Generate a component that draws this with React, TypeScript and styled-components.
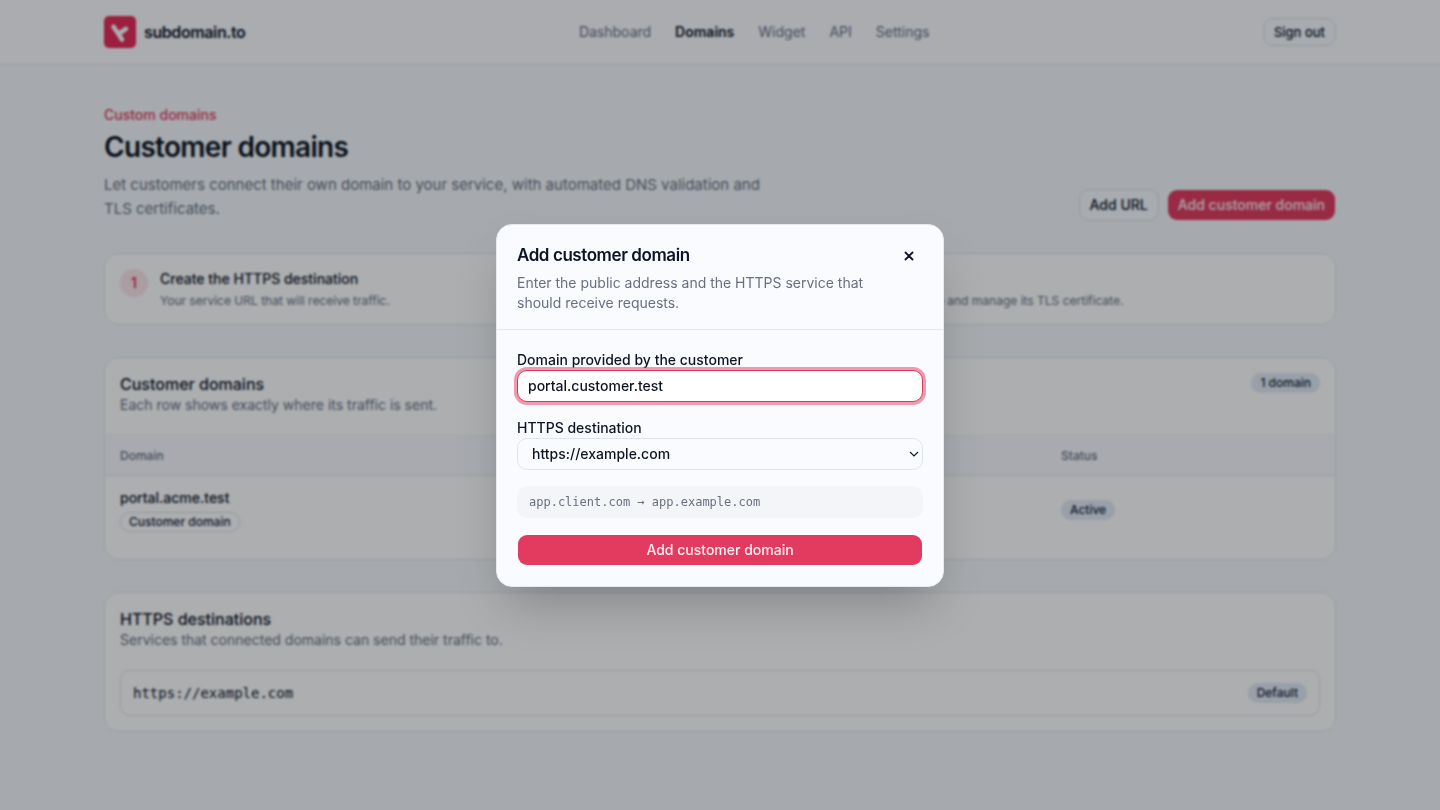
import React, { useEffect, useRef } from "react";
import styled, { createGlobalStyle, css } from "styled-components";

const GlobalStyle = createGlobalStyle`
  *, *::before, *::after { box-sizing: border-box; }
  body {
    margin: 0;
    background: #f7fafc;
    color: #0d1424;
    font-family: Inter, "Liberation Sans", sans-serif;
    font-size: 14px;
    line-height: 20px;
  }
  h1, h2, h3, p, ul, ol { margin: 0; padding: 0; }
  ul, ol { list-style: none; }
  button, input, select { font: inherit; color: inherit; margin: 0; }
`;

const mono = css`
  font-family: "DejaVu Sans Mono", "Liberation Mono", monospace;
`;

const TopBar = styled.header`
  background: #fcfcff;
  border-bottom: 1px solid #e2e6ee;
`;

const TopBarInner = styled.div`
  max-width: 1280px;
  height: 64px;
  margin: 0 auto;
  padding: 0 24px;
  display: flex;
  align-items: center;
  justify-content: space-between;
`;

const Brand = styled.a`
  display: flex;
  align-items: center;
  gap: 8px;
  color: inherit;
  text-decoration: none;
  font-size: 16px;
  font-weight: 600;
  letter-spacing: -0.025em;
`;

const Nav = styled.nav`
  display: flex;
  gap: 24px;
`;

const NavLink = styled.a<{ $active?: boolean }>`
  color: ${(p) => (p.$active ? "#0d1424" : "#687080")};
  font-weight: ${(p) => (p.$active ? 600 : 400)};
  text-decoration: none;
`;

const Button = styled.button<{ $variant: "primary" | "outline"; $small?: boolean; $block?: boolean }>`
  height: ${(p) => (p.$small ? 28 : 32)}px;
  width: ${(p) => (p.$block ? "100%" : "auto")};
  padding: 0 10px;
  border: 1px solid ${(p) => (p.$variant === "primary" ? "transparent" : "#dde2ea")};
  border-radius: 10px;
  background: ${(p) => (p.$variant === "primary" ? "#e33b5f" : "#f9fbff")};
  background-clip: padding-box;
  color: ${(p) => (p.$variant === "primary" ? "#fff1f3" : "#0d1424")};
  font-size: ${(p) => (p.$small ? 13 : 14)}px;
  font-weight: 500;
  white-space: nowrap;
`;

const Main = styled.main`
  max-width: 1280px;
  margin: 0 auto;
  padding: 40px 24px;
  display: flex;
  flex-direction: column;
  gap: 32px;
`;

const Hero = styled.section`
  display: flex;
  align-items: flex-end;
  justify-content: space-between;
  gap: 24px;
`;

const HeroText = styled.div`
  max-width: 672px;
`;

const Eyebrow = styled.p`
  color: #e33b5f;
  font-weight: 500;
`;

const PageTitle = styled.h1`
  margin: 4px 0 8px;
  font-size: 28px;
  line-height: 36px;
  font-weight: 600;
  letter-spacing: -0.025em;
`;

const Lead = styled.p`
  color: #687080;
  font-size: 15px;
  line-height: 24px;
`;

const Actions = styled.div`
  display: flex;
  gap: 8px;
`;

const Card = styled.section`
  border: 1px solid #e2e6ea;
  border-radius: 14px;
  background: #fff;
  overflow: hidden;
`;

const Steps = styled.ol`
  display: grid;
  grid-template-columns: 1fr 1fr;
  gap: 16px;
  padding: 15px;
`;

const Step = styled.li`
  display: flex;
  gap: 12px;
`;

const StepNumber = styled.span`
  flex: none;
  width: 28px;
  height: 28px;
  border-radius: 50%;
  background: #fce7eb;
  color: #e33b5f;
  font-weight: 600;
  line-height: 28px;
  text-align: center;
`;

const StepTitle = styled.h3`
  font-size: 14px;
  font-weight: 500;
`;

const StepText = styled.p`
  margin-top: 4px;
  color: #687080;
  font-size: 12px;
  line-height: 16px;
`;

const CardHeader = styled.div`
  display: flex;
  align-items: flex-start;
  justify-content: space-between;
  padding: 15px 15px 20px;
`;

const CardTitle = styled.h2`
  font-size: 16px;
  line-height: 22px;
  font-weight: 500;
`;

const CardText = styled.p`
  color: #687080;
`;

const Badge = styled.span<{ $outline?: boolean }>`
  display: inline-block;
  height: 20px;
  padding: 0 8px;
  border: 1px solid ${(p) => (p.$outline ? "#dde2ea" : "transparent")};
  border-radius: 10px;
  background: ${(p) => (p.$outline ? "transparent" : "#e4eaf5")};
  color: #141c38;
  font-size: 12px;
  line-height: 18px;
  font-weight: 500;
  white-space: nowrap;
`;

const Table = styled.table`
  width: 100%;
  margin-bottom: 15px;
  border-top: 1px solid #f0f2f6;
  table-layout: fixed;
  border-collapse: separate;
  border-spacing: 0;
  text-align: left;
`;

const Th = styled.th<{ $width?: string }>`
  width: ${(p) => p.$width ?? "auto"};
  height: 40px;
  padding: 0 15px;
  border-bottom: 1px solid #e2e6ee;
  background: #f9fafe;
  color: #687080;
  font-size: 12px;
  font-weight: 500;
`;

const Td = styled.td`
  padding: 12px 15px;
`;

const DomainCell = styled.div`
  display: flex;
  flex-direction: column;
  align-items: flex-start;
  gap: 4px;
  font-weight: 500;
`;

const StatusCell = styled.div`
  display: flex;
`;

const DestinationRow = styled.li`
  display: flex;
  align-items: center;
  justify-content: space-between;
  margin: 0 15px 15px;
  padding: 12px;
  border: 1px solid #e2e6ea;
  border-radius: 10px;
`;

const DestinationUrl = styled.span`
  ${mono}
`;

const Overlay = styled.div`
  position: fixed;
  inset: 0;
  display: flex;
  align-items: center;
  justify-content: center;
  background: rgba(4, 8, 16, 0.33);
  backdrop-filter: blur(1px);
`;

const Dialog = styled.div`
  width: 448px;
  max-width: calc(100% - 32px);
  border: 1px solid #e6e9ef;
  border-radius: 16px;
  background: #f9fbff;
  box-shadow: 0 25px 50px -12px rgba(0, 0, 0, 0.25);
`;

const DialogHeader = styled.div`
  display: flex;
  align-items: flex-start;
  justify-content: space-between;
  gap: 16px;
  padding: 20px 20px 16px;
  border-bottom: 1px solid #e4e8ee;
`;

const DialogTitle = styled.h2`
  margin-bottom: 8px;
  font-size: 17px;
  line-height: 20px;
  font-weight: 600;
  letter-spacing: -0.025em;
`;

const CloseButton = styled.button`
  display: flex;
  align-items: center;
  justify-content: center;
  flex: none;
  width: 28px;
  height: 22px;
  padding: 0;
  border: 0;
  background: transparent;
`;

const Form = styled.form`
  display: flex;
  flex-direction: column;
  gap: 16px;
  padding: 20px;
`;

const Field = styled.label`
  display: flex;
  flex-direction: column;
  font-weight: 500;
`;

const control = css`
  width: 100%;
  height: 32px;
  padding: 0 10px;
  border: 1px solid #dfe3ea;
  border-radius: 10px;
  outline: none;
  font-weight: 500;
`;

const TextInput = styled.input`
  ${control}
  background: #fff;
  &:focus {
    border-color: #d93a5c;
    box-shadow: 0 0 0 3px rgba(227, 59, 95, 0.5);
  }
`;

const SelectBox = styled.span`
  position: relative;
  display: flex;
  svg {
    position: absolute;
    top: 11px;
    right: 4px;
    pointer-events: none;
  }
`;

const Select = styled.select`
  ${control}
  padding: 0 14px;
  appearance: none;
  background: #f9fbff;
`;

const Example = styled.p`
  ${mono}
  padding: 8px 12px;
  border-radius: 10px;
  background: #f3f5f8;
  color: #687080;
  font-size: 12px;
  line-height: 16px;
`;

const Logo = () => (
  <svg width="32" height="32" viewBox="0 0 32 32" aria-hidden="true">
    <rect width="32" height="32" rx="5" fill="#e62a55" />
    <path
      d="M9.500 10.800L13.800 17L18 23.600M15 17.500L22 12.800"
      fill="none"
      stroke="#fff"
      strokeWidth="4.600"
      strokeLinecap="round"
      strokeLinejoin="round"
    />
  </svg>
);

const CloseIcon = () => (
  <svg width="14" height="14" viewBox="0 0 14 14" aria-hidden="true">
    <path d="M3.500 3.500L10.500 10.500M10.500 3.500L3.500 10.500" stroke="#0d1424" strokeWidth="1.800" strokeLinecap="round" />
  </svg>
);

const ChevronIcon = () => (
  <svg width="10" height="10" viewBox="0 0 10 10" aria-hidden="true">
    <path d="M1 3L5 7L9 3" fill="none" stroke="#0d1424" strokeWidth="1.100" />
  </svg>
);

const links = ["Dashboard", "Domains", "Widget", "API", "Settings"];

const steps = [
  { title: "Create the HTTPS destination", text: "Your service URL that will receive traffic." },
  { title: "Connect another domain", text: "We validate its DNS, then issue and manage its TLS certificate." },
];

export default function App() {
  const domainRef = useRef<HTMLInputElement>(null);

  useEffect(() => {
    const input = domainRef.current;
    if (!input) return;
    input.focus();
    input.setSelectionRange(input.value.length, input.value.length);
  }, []);

  return (
    <>
      <GlobalStyle />
      <TopBar>
        <TopBarInner>
          <Brand href="#">
            <Logo />
            subdomain.to
          </Brand>
          <Nav>
            {links.map((link) => (
              <NavLink key={link} href="#" $active={link === "Domains"}>
                {link}
              </NavLink>
            ))}
          </Nav>
          <Button $variant="outline" $small>
            Sign out
          </Button>
        </TopBarInner>
      </TopBar>

      <Main>
        <Hero>
          <HeroText>
            <Eyebrow>Custom domains</Eyebrow>
            <PageTitle>Customer domains</PageTitle>
            <Lead>
              Let customers connect their own domain to your service, with automated DNS validation and TLS
              certificates.
            </Lead>
          </HeroText>
          <Actions>
            <Button $variant="outline">Add URL</Button>
            <Button $variant="primary">Add customer domain</Button>
          </Actions>
        </Hero>

        <Card>
          <Steps>
            {steps.map((step, i) => (
              <Step key={step.title}>
                <StepNumber>{i + 1}</StepNumber>
                <div>
                  <StepTitle>{step.title}</StepTitle>
                  <StepText>{step.text}</StepText>
                </div>
              </Step>
            ))}
          </Steps>
        </Card>

        <Card>
          <CardHeader>
            <div>
              <CardTitle>Customer domains</CardTitle>
              <CardText>Each row shows exactly where its traffic is sent.</CardText>
            </div>
            <Badge>1 domain</Badge>
          </CardHeader>
          <Table>
            <thead>
              <tr>
                <Th $width="40%">Domain</Th>
                <Th>Destination</Th>
                <Th $width="289px">Status</Th>
              </tr>
            </thead>
            <tbody>
              <tr>
                <Td>
                  <DomainCell>
                    portal.acme.test
                    <Badge $outline>Customer domain</Badge>
                  </DomainCell>
                </Td>
                <Td>https://example.com</Td>
                <Td>
                  <StatusCell>
                    <Badge>Active</Badge>
                  </StatusCell>
                </Td>
              </tr>
            </tbody>
          </Table>
        </Card>

        <Card>
          <CardHeader>
            <div>
              <CardTitle>HTTPS destinations</CardTitle>
              <CardText>Services that connected domains can send their traffic to.</CardText>
            </div>
          </CardHeader>
          <ul>
            <DestinationRow>
              <DestinationUrl>https://example.com</DestinationUrl>
              <Badge>Default</Badge>
            </DestinationRow>
          </ul>
        </Card>
      </Main>

      <Overlay>
        <Dialog role="dialog" aria-modal="true" aria-labelledby="dialog-title">
          <DialogHeader>
            <div>
              <DialogTitle id="dialog-title">Add customer domain</DialogTitle>
              <CardText>Enter the public address and the HTTPS service that should receive requests.</CardText>
            </div>
            <CloseButton aria-label="Close">
              <CloseIcon />
            </CloseButton>
          </DialogHeader>
          <Form>
            <Field>
              Domain provided by the customer
              <TextInput ref={domainRef} type="text" defaultValue="portal.customer.test" />
            </Field>
            <Field>
              HTTPS destination
              <SelectBox>
                <Select defaultValue="https://example.com">
                  <option>https://example.com</option>
                </Select>
                <ChevronIcon />
              </SelectBox>
            </Field>
            <Example>app.client.com → app.example.com</Example>
            <Button type="button" $variant="primary" $block>
              Add customer domain
            </Button>
          </Form>
        </Dialog>
      </Overlay>
    </>
  );
}
